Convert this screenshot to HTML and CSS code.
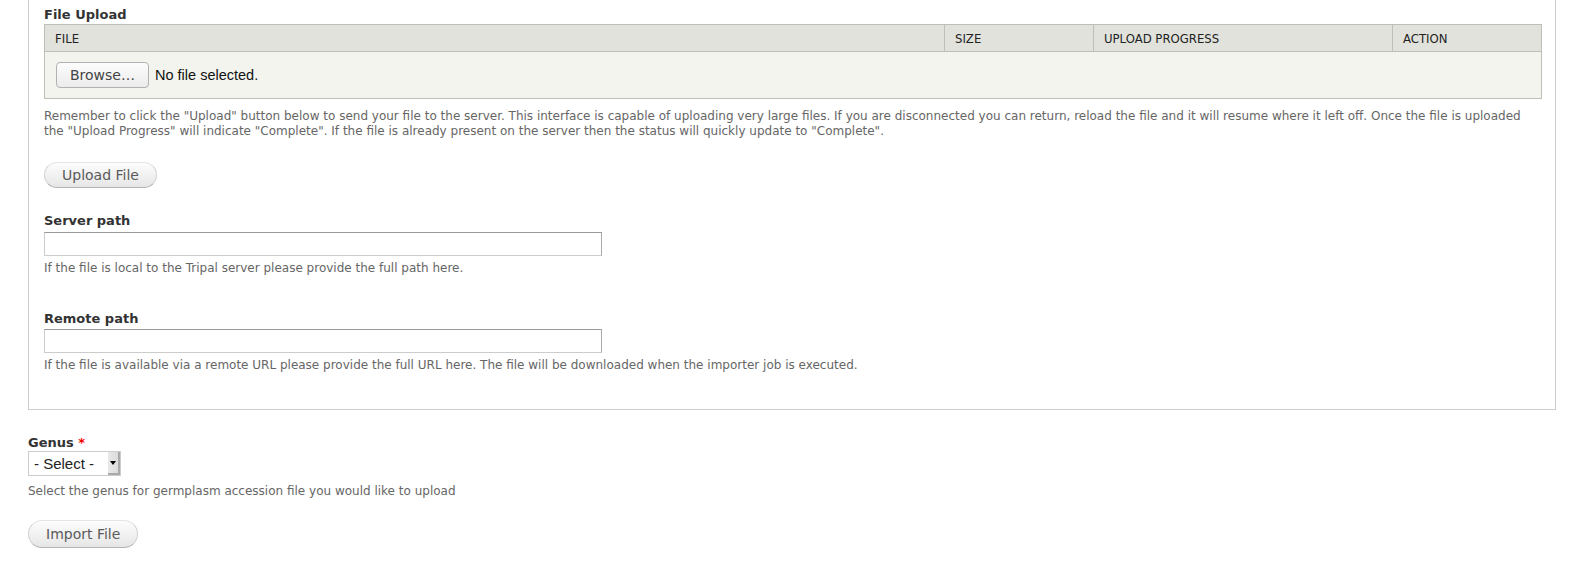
FILE: index.html
```html
<!DOCTYPE html>
<html>
<head>
<meta charset="utf-8">
<link rel="stylesheet" href="styles.css">
</head>
<body>
<div class="page">
  <fieldset class="fs">
    <div class="fs-wrap">
      <div class="field upload">
        <label class="lbl">File Upload</label>
        <table class="files">
          <thead>
            <tr>
              <th class="c-file">File</th>
              <th class="c-size">Size</th>
              <th class="c-prog">Upload Progress</th>
              <th class="c-act">Action</th>
            </tr>
          </thead>
          <tbody>
            <tr>
              <td colspan="4">
                <div class="file-input">
                  <span class="browse">Browse…</span>
                  <span class="nofile">No file selected.</span>
                </div>
              </td>
            </tr>
          </tbody>
        </table>
        <div class="desc">Remember to click the "Upload" button below to send your file to the server. This interface is capable of uploading very large files. If you are disconnected you can return, reload the file and it will resume where it left off. Once the file is uploaded the "Upload Progress" will indicate "Complete". If the file is already present on the server then the status will quickly update to "Complete".</div>
      </div>
      <button class="btn btn-upload" type="button">Upload File</button>
      <div class="field server">
        <label class="lbl">Server path</label>
        <input class="text" type="text">
        <div class="desc">If the file is local to the Tripal server please provide the full path here.</div>
      </div>
      <div class="field remote">
        <label class="lbl">Remote path</label>
        <input class="text" type="text">
        <div class="desc">If the file is available via a remote URL please provide the full URL here. The file will be downloaded when the importer job is executed.</div>
      </div>
    </div>
  </fieldset>
  <div class="field genus">
    <label class="lbl">Genus <span class="req">*</span></label>
    <div class="select">
      <span class="sel-text">- Select -</span>
      <span class="sel-arrow"><svg width="6" height="4" viewBox="0 0 6 4"><path d="M0 0h6L3 4z" fill="#000"/></svg></span>
    </div>
    <div class="desc">Select the genus for germplasm accession file you would like to upload</div>
  </div>
  <button class="btn btn-import" type="button">Import File</button>
</div>
</body>
</html>
```

FILE: styles.css
```css
html, body {
  margin: 0;
  padding: 0;
  background: #fff;
}
body {
  font-family: "DejaVu Sans", Verdana, sans-serif;
  font-size: 13px;
  color: #333;
}
.page {
  padding: 0 27px 0 28px;
}
.fs {
  margin: 0;
  padding: 0;
  border: 1px solid #ccc;
  border-top: none;
  min-width: 0;
}
.fs-wrap {
  padding: 7px 13px 36px 15px;
}
.lbl {
  display: block;
  font-weight: bold;
  font-size: 13px;
  line-height: 16px;
  color: #333;
}
.req {
  color: #f00;
}
.files {
  width: 100%;
  border-collapse: collapse;
  margin-top: 1px;
}
.files th {
  background: #e1e2dc;
  border: 1px solid #bfbfba;
  text-transform: uppercase;
  font-weight: normal;
  font-family: "DejaVu Sans Condensed", "DejaVu Sans", sans-serif;
  font-size: 13px;
  color: #222;
  text-align: left;
  padding: 0 10px;
  height: 26px;
}
.files th.c-file { width: 879px; }
.files th.c-size { width: 128px; }
.files th.c-prog { width: 278px; }
.files td {
  background: #f3f4ee;
  border: 1px solid #bebfb9;
  padding: 0 11px;
  height: 46px;
}
.file-input {
  display: flex;
  align-items: center;
}
.browse {
  display: inline-flex;
  align-items: center;
  justify-content: center;
  box-sizing: border-box;
  width: 93px;
  height: 26px;
  border: 1px solid #b1b1b1;
  border-radius: 4px;
  background: linear-gradient(#fcfcfc, #ececec);
  font-family: "DejaVu Sans", sans-serif;
  font-size: 14px;
  color: #444;
}
.nofile {
  margin-left: 6px;
  font-family: "Liberation Sans", Arial, sans-serif;
  font-size: 14.5px;
  color: #111;
}
.desc {
  font-size: 12px;
  line-height: 15px;
  color: #666;
  margin-top: 10px;
}
.btn {
  display: block;
  box-sizing: border-box;
  font-family: "DejaVu Sans", sans-serif;
  font-size: 14px;
  color: #5a5a5a;
  border: 1px solid #e4e4e4;
  border-bottom-color: #b4b4b4;
  border-left-color: #d2d2d2;
  border-right-color: #d2d2d2;
  background: linear-gradient(#fdfdfd, #e6e6e6);
  border-radius: 20px;
  padding: 0 17px;
  cursor: pointer;
}
.btn-upload {
  margin-top: 23px;
  height: 26px;
}
.field.server {
  margin-top: 25px;
}
.field.remote {
  margin-top: 35px;
}
.text {
  display: block;
  box-sizing: border-box;
  width: 558px;
  height: 24px;
  margin: 3px 0 0;
  padding: 2px;
  border: 1px solid #ccc;
  border-top-color: #999;
  border-right-color: #aaa;
  background: #fff;
}
.remote .text {
  margin-top: 2px;
}
.server .desc, .remote .desc {
  margin-top: 5px;
}
.field.genus {
  margin-top: 25px;
}
.select {
  position: relative;
  box-sizing: border-box;
  width: 93px;
  height: 25px;
  margin-top: 0;
  border: 1px solid #ccc;
  background: #fff;
  display: flex;
  align-items: center;
}
.sel-text {
  font-family: "Liberation Sans", Arial, sans-serif;
  font-size: 15px;
  color: #222;
  padding-left: 5px;
}
.sel-arrow {
  position: absolute;
  right: 0;
  top: 0;
  bottom: 0;
  width: 12px;
  box-sizing: border-box;
  background: linear-gradient(90deg, #e8e8e8, #dcdcdc);
  border-right: 2px solid #a9a9a9;
  border-bottom: 2px solid #a9a9a9;
  display: flex;
  align-items: center;
  justify-content: center;
}
.genus .desc {
  margin-top: 8px;
}
.btn-import {
  margin-top: 21px;
  height: 28px;
}
```
